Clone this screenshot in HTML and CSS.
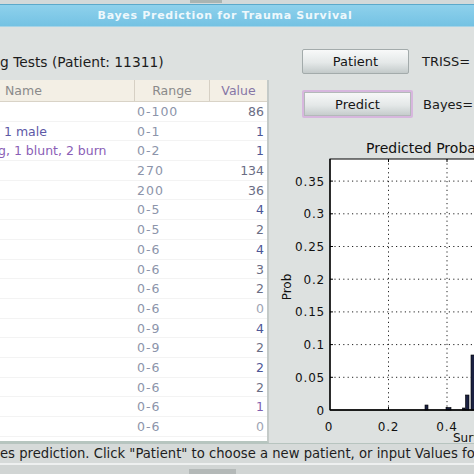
FILE: index.html
```html
<!DOCTYPE html>
<html>
<head>
<meta charset="utf-8">
<link rel="stylesheet" href="styles.css">
</head>
<body>
<div class="topstrip"><span class="tab"></span></div>
<div class="titlebar">Bayes Prediction for Trauma Survival</div>
<div class="main">
  <div class="left">
    <div class="caption">g Tests (Patient: 11311)</div>
    <div class="table">
      <div class="thead">
        <div class="th name">Name</div>
        <div class="th range">Range</div>
        <div class="th value">Value</div>
      </div>
      <div class="tbody">
        <div class="tr"><div class="td name"></div><div class="td range">0-100</div><div class="td value">86</div></div>
        <div class="tr"><div class="td name n1">1 male</div><div class="td range">0-1</div><div class="td value blue">1</div></div>
        <div class="tr"><div class="td name n2">g, 1 blunt, 2 burn</div><div class="td range">0-2</div><div class="td value blue">1</div></div>
        <div class="tr"><div class="td name"></div><div class="td range">270</div><div class="td value">134</div></div>
        <div class="tr"><div class="td name"></div><div class="td range">200</div><div class="td value">36</div></div>
        <div class="tr"><div class="td name"></div><div class="td range">0-5</div><div class="td value blue">4</div></div>
        <div class="tr"><div class="td name"></div><div class="td range">0-5</div><div class="td value">2</div></div>
        <div class="tr"><div class="td name"></div><div class="td range">0-6</div><div class="td value blue">4</div></div>
        <div class="tr"><div class="td name"></div><div class="td range">0-6</div><div class="td value">3</div></div>
        <div class="tr"><div class="td name"></div><div class="td range">0-6</div><div class="td value">2</div></div>
        <div class="tr"><div class="td name"></div><div class="td range">0-6</div><div class="td value light">0</div></div>
        <div class="tr"><div class="td name"></div><div class="td range">0-9</div><div class="td value blue">4</div></div>
        <div class="tr"><div class="td name"></div><div class="td range">0-9</div><div class="td value">2</div></div>
        <div class="tr"><div class="td name"></div><div class="td range">0-6</div><div class="td value blue">2</div></div>
        <div class="tr"><div class="td name"></div><div class="td range">0-6</div><div class="td value">2</div></div>
        <div class="tr"><div class="td name"></div><div class="td range">0-6</div><div class="td value purple">1</div></div>
        <div class="tr"><div class="td name"></div><div class="td range">0-6</div><div class="td value light">0</div></div>
      </div>
    </div>
  </div>
  <div class="right">
    <div class="btnrow">
      <button class="btn">Patient</button>
      <span class="stat">TRISS=</span>
    </div>
    <div class="btnrow second">
      <button class="btn focus">Predict</button>
      <span class="stat bayes">Bayes=</span>
    </div>
    <svg class="plot" width="205" height="317" viewBox="0 0 205 317">
      <text class="ptitle" x="97" y="27">Predicted Probability Distribution</text>
      <rect x="61" y="33" width="200" height="251" fill="#ffffff" stroke="#000" stroke-width="1"/>
      <g class="grid">
        <line x1="61" y1="55.1" x2="205" y2="55.1"/>
        <line x1="61" y1="87.8" x2="205" y2="87.8"/>
        <line x1="61" y1="120.5" x2="205" y2="120.5"/>
        <line x1="61" y1="153.2" x2="205" y2="153.2"/>
        <line x1="61" y1="185.9" x2="205" y2="185.9"/>
        <line x1="61" y1="218.6" x2="205" y2="218.6"/>
        <line x1="61" y1="251.3" x2="205" y2="251.3"/>
        <line x1="119.5" y1="33" x2="119.5" y2="284"/>
        <line x1="178" y1="33" x2="178" y2="284"/>
      </g>
      <g class="ticks">
        <line x1="61" y1="55.1" x2="64" y2="55.1"/>
        <line x1="61" y1="87.8" x2="64" y2="87.8"/>
        <line x1="61" y1="120.5" x2="64" y2="120.5"/>
        <line x1="61" y1="153.2" x2="64" y2="153.2"/>
        <line x1="61" y1="185.9" x2="64" y2="185.9"/>
        <line x1="61" y1="218.6" x2="64" y2="218.6"/>
        <line x1="61" y1="251.3" x2="64" y2="251.3"/>
        <line x1="119.5" y1="284" x2="119.5" y2="281"/>
        <line x1="178" y1="284" x2="178" y2="281"/>
        <line x1="119.5" y1="33" x2="119.5" y2="36"/>
        <line x1="178" y1="33" x2="178" y2="36"/>
      </g>
      <g class="bars">
        <rect x="156" y="279" width="3" height="5"/>
        <rect x="177" y="281.5" width="5" height="2.5"/>
        <rect x="193.5" y="282" width="2.5" height="2"/>
        <rect x="196.5" y="269" width="3.5" height="15"/>
        <rect x="202" y="229" width="5" height="55"/>
      </g>
      <line x1="61" y1="284" x2="205" y2="284" stroke="#000" stroke-width="1.3"/>
      <line x1="61" y1="33" x2="61" y2="284" stroke="#000" stroke-width="1.3"/>
      <g class="ylab">
        <text x="56" y="59.6">0.35</text>
        <text x="56" y="92.3">0.3</text>
        <text x="56" y="125">0.25</text>
        <text x="56" y="157.7">0.2</text>
        <text x="56" y="190.4">0.15</text>
        <text x="56" y="223.1">0.1</text>
        <text x="56" y="255.8">0.05</text>
        <text x="56" y="288.5">0</text>
      </g>
      <g class="xlab">
        <text x="60" y="305">0</text>
        <text x="119.5" y="305">0.2</text>
        <text x="178" y="305">0.4</text>
      </g>
      <text class="axlabel" x="18" y="161" transform="rotate(-90 18 161)" text-anchor="middle" dy="4">Prob</text>
      <text class="axlabel" x="184" y="316">Survival Probability</text>
    </svg>
  </div>
</div>
<div class="status">es prediction. Click "Patient" to choose a new patient, or input Values for prediction.</div>
<div class="footer"><span class="grip"></span></div>
</body>
</html>
```
FILE: styles.css
```css
html, body {
  margin: 0;
  padding: 0;
}
body {
  width: 474px;
  height: 474px;
  overflow: hidden;
  background: #dde1e0;
  font-family: "DejaVu Sans", "Noto Sans", sans-serif;
  color: #1a1a1a;
}
.topstrip {
  height: 4px;
  background: #d3d9d9;
  display: flex;
  padding-left: 190px;
}
.tab {
  width: 32px;
  height: 3px;
  background: #a9b4b2;
}
.titlebar {
  height: 21px;
  border-top: 1px solid #5ba9cb;
  border-bottom: 1px solid #a5d3e6;
  background: linear-gradient(#8ed1ec, #74c2e3);
  color: #eef8fc;
  font-weight: bold;
  font-size: 11px;
  letter-spacing: 0.7px;
  display: flex;
  align-items: center;
  justify-content: center;
  padding-right: 24px;
  white-space: nowrap;
}
.main {
  display: flex;
  height: 416px;
}
.left {
  width: 269px;
  display: flex;
  flex-direction: column;
}
.caption {
  margin-top: 27px;
  height: 16px;
  line-height: 16px;
  font-size: 13.8px;
  margin-bottom: 10px;
  white-space: nowrap;
  color: #1c1c1c;
}
.table {
  flex: 1;
  background: #ffffff;
  border-right: 2px solid #c4cac8;
  border-bottom: 2px solid #b6c5bf;
  width: 267px;
}
.thead {
  display: grid;
  grid-template-columns: 135px 75px 57px;
  height: 22px;
  box-sizing: border-box;
  background: #f3efe5;
  border-bottom: 1px solid #d9d3c7;
}
.th {
  font-size: 12.5px;
  line-height: 21px;
  color: #8a8a8a;
  border-right: 1px solid #d6d0c4;
  white-space: nowrap;
}
.th.name { padding-left: 5px; }
.th.range { text-align: center; }
.th.value { text-align: center; color: #8676a6; border-right: none; }
.tr {
  display: grid;
  grid-template-columns: 135px 75px 57px;
  height: 19.7px;
  box-sizing: border-box;
  border-bottom: 1px solid #f3f3f3;
}
.td {
  font-size: 12.5px;
  line-height: 19px;
  white-space: nowrap;
  overflow: hidden;
}
.td.n1 { padding-left: 4px; color: #5d58a6; }
.td.n2 { margin-left: -2px; color: #8a5eb6; }
.td.range {
  padding-left: 2px;
  letter-spacing: 1px;
  color: #8c94aa;
}
.td.value {
  text-align: right;
  padding-right: 3px;
  color: #6a6d84;
}
.td.value.blue { color: #4c5596; }
.td.value.purple { color: #8060b0; }
.td.value.light { color: #a0a4b4; }
.right {
  flex: 1;
  display: flex;
  flex-direction: column;
}
.btnrow {
  display: flex;
  align-items: center;
  margin-top: 22px;
  height: 25px;
  padding-left: 33px;
}
.btnrow.second {
  margin-top: 16px;
  height: 28px;
}
.btn {
  width: 107px;
  height: 25px;
  padding: 0;
  font-family: "DejaVu Sans", sans-serif;
  font-size: 13px;
  color: #151515;
  background: linear-gradient(#f8f9f9, #e4e8e8 55%, #c3caca);
  border: 1px solid #a3abab;
  border-radius: 2px;
  box-sizing: border-box;
}
.btn.focus {
  width: 111px;
  height: 28px;
  border: 2px solid #d7b7de;
  box-shadow: inset 0 0 0 1px #b3b9b9;
}
.stat {
  margin-left: 13px;
  font-size: 13px;
  white-space: nowrap;
}
.stat.bayes { margin-left: 10px; }
.plot {
  display: block;
  margin-top: 8px;
  overflow: hidden;
}
.plot text {
  font-family: "DejaVu Sans", sans-serif;
  fill: #111;
}
.ptitle { font-size: 14px; }
.grid line {
  stroke: #222;
  stroke-width: 1;
  stroke-dasharray: 1.2 3.2;
}
.ticks line {
  stroke: #000;
  stroke-width: 1;
}
.bars rect {
  fill: #1b2142;
  stroke: #000;
  stroke-width: 0.6;
}
.ylab text {
  font-size: 12px;
  letter-spacing: 0.8px;
  text-anchor: end;
}
.xlab text {
  font-size: 12px;
  letter-spacing: 0.8px;
  text-anchor: middle;
}
.axlabel { font-size: 12px; }
.status {
  height: 19px;
  line-height: 19px;
  border-top: 1px solid #b7c4bf;
  background: #d6dad9;
  font-size: 13.2px;
  white-space: nowrap;
  overflow: hidden;
  color: #1e1e1e;
}
.footer {
  height: 9px;
  border-top: 2px solid #eef0f0;
  background: #d1d5d4;
  display: flex;
  padding-left: 189px;
}
.grip {
  width: 47px;
  height: 5px;
  margin-top: 4px;
  background: #b4b9b8;
}
```
